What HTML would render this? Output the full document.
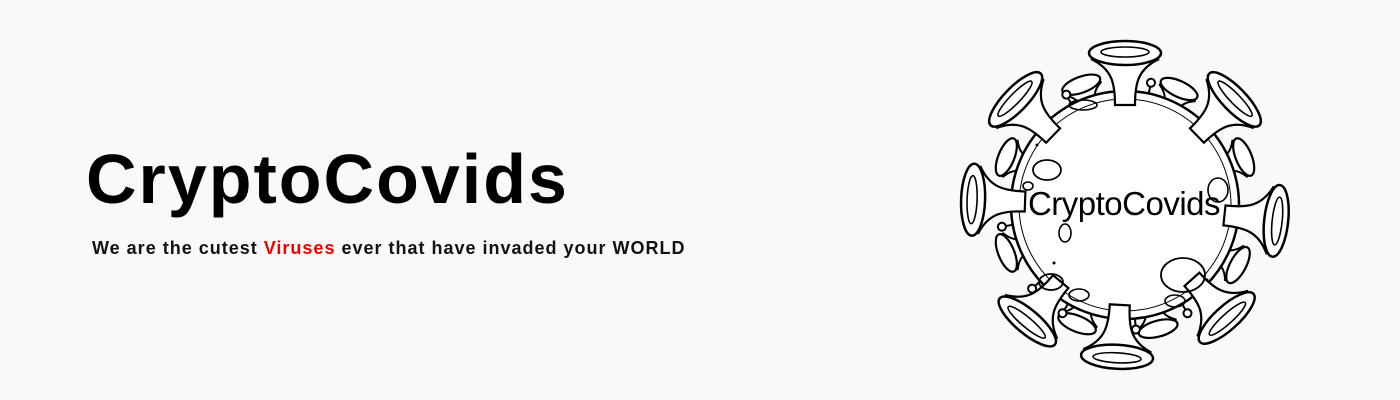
<!DOCTYPE html>
<html><head><meta charset="utf-8"><style>
html,body{margin:0;padding:0;}
body{width:1400px;height:400px;background:#f9f9f9;position:relative;overflow:hidden;font-family:"Liberation Sans",sans-serif;}
h1{position:absolute;left:86px;top:139px;margin:0;font-size:70px;font-weight:bold;color:#000;letter-spacing:2px;line-height:80px;}
p{position:absolute;left:92px;top:238px;margin:0;font-size:18px;font-weight:bold;color:#111;letter-spacing:1px;}
p span{color:#e00;}
svg{position:absolute;left:0;top:0;}
</style></head><body>
<h1>CryptoCovids</h1>
<p>We are the cutest <span>Viruses</span> ever that have invaded your WORLD</p>
<svg width="1400" height="400" viewBox="0 0 1400 400">
<defs>
<g id="sp">
<path d="M-10,-100 C-10,-122 -13,-136 -34,-146 L34,-146 C13,-136 10,-122 10,-100 Z" fill="#fff" stroke="#000" stroke-width="2.2"/>
<ellipse cx="0" cy="-152" rx="36" ry="12" fill="#fff" stroke="#000" stroke-width="2.5"/>
<ellipse cx="0" cy="-153" rx="24" ry="5" fill="none" stroke="#000" stroke-width="1.6"/>
</g>
<g id="ss">
<path d="M-7,-100 C-7,-112 -9,-118 -20,-124 L20,-124 C9,-118 7,-112 7,-100 Z" fill="#fff" stroke="#000" stroke-width="2"/>
<ellipse cx="0" cy="-128" rx="20" ry="8" fill="#fff" stroke="#000" stroke-width="2.2"/>
</g>
<g id="pin">
<line x1="0" y1="-105" x2="0" y2="-122" stroke="#000" stroke-width="2"/>
<circle cx="0" cy="-125" r="4" fill="#fff" stroke="#000" stroke-width="2"/>
</g>
</defs>
<g transform="translate(1125,205)">
<g transform="rotate(-20)"><use href="#ss"/></g>
<g transform="rotate(25)"><use href="#ss"/></g>
<g transform="rotate(-68)"><use href="#ss"/></g>
<g transform="rotate(68)"><use href="#ss"/></g>
<g transform="rotate(118)"><use href="#ss"/></g>
<g transform="rotate(165)"><use href="#ss"/></g>
<g transform="rotate(-158)"><use href="#ss"/></g>
<g transform="rotate(-112)"><use href="#ss"/></g>
<g transform="rotate(-28)"><use href="#pin"/></g>
<g transform="rotate(12)"><use href="#pin"/></g>
<g transform="rotate(-132)"><use href="#pin"/></g>
<g transform="rotate(-100)"><use href="#pin"/></g>
<g transform="rotate(-150)"><use href="#pin"/></g>
<g transform="rotate(150)"><use href="#pin"/></g>
<g transform="rotate(175)"><use href="#pin"/></g>
<circle r="114" fill="#fff" stroke="#000" stroke-width="2.5"/>
<circle r="106" fill="none" stroke="#000" stroke-width="1"/>
<g transform="rotate(0)"><use href="#sp"/></g>
<g transform="rotate(-46)"><use href="#sp"/></g>
<g transform="rotate(46)"><use href="#sp"/></g>
<g transform="rotate(-88)"><use href="#sp"/></g>
<g transform="rotate(96)"><use href="#sp"/></g>
<g transform="rotate(-140)"><use href="#sp"/></g>
<g transform="rotate(138)"><use href="#sp"/></g>
<g transform="rotate(183)"><use href="#sp"/></g>
<circle cx="-88" cy="-60" r="1.5"/>
<ellipse cx="-78" cy="-35" rx="14" ry="10" fill="none" stroke="#000" stroke-width="1.8"/>
<ellipse cx="-97" cy="-19" rx="5" ry="4" fill="none" stroke="#000" stroke-width="1.6"/>
<ellipse cx="-60" cy="28" rx="6" ry="9" fill="none" stroke="#000" stroke-width="1.6"/>
<ellipse cx="-46" cy="90" rx="10" ry="6" fill="none" stroke="#000" stroke-width="1.6"/>
<ellipse cx="-74" cy="77" rx="12" ry="8" fill="none" stroke="#000" stroke-width="1.8"/>
<ellipse cx="58" cy="70" rx="22" ry="17" fill="none" stroke="#000" stroke-width="1.8"/>
<ellipse cx="50" cy="96" rx="10" ry="6" fill="none" stroke="#000" stroke-width="1.6"/>
<ellipse cx="93" cy="-15" rx="10" ry="12" fill="none" stroke="#000" stroke-width="1.6"/>
<ellipse cx="-42" cy="-100" rx="14" ry="5" fill="none" stroke="#000" stroke-width="1.6"/>
<circle cx="-71" cy="58" r="1.5"/>
<circle cx="82" cy="75" r="1.5"/>
</g>
<text x="1124" y="215" text-anchor="middle" font-family="Liberation Sans, sans-serif" font-size="33" fill="#000" letter-spacing="-0.5">CryptoCovids</text>
</svg>
</body></html>
